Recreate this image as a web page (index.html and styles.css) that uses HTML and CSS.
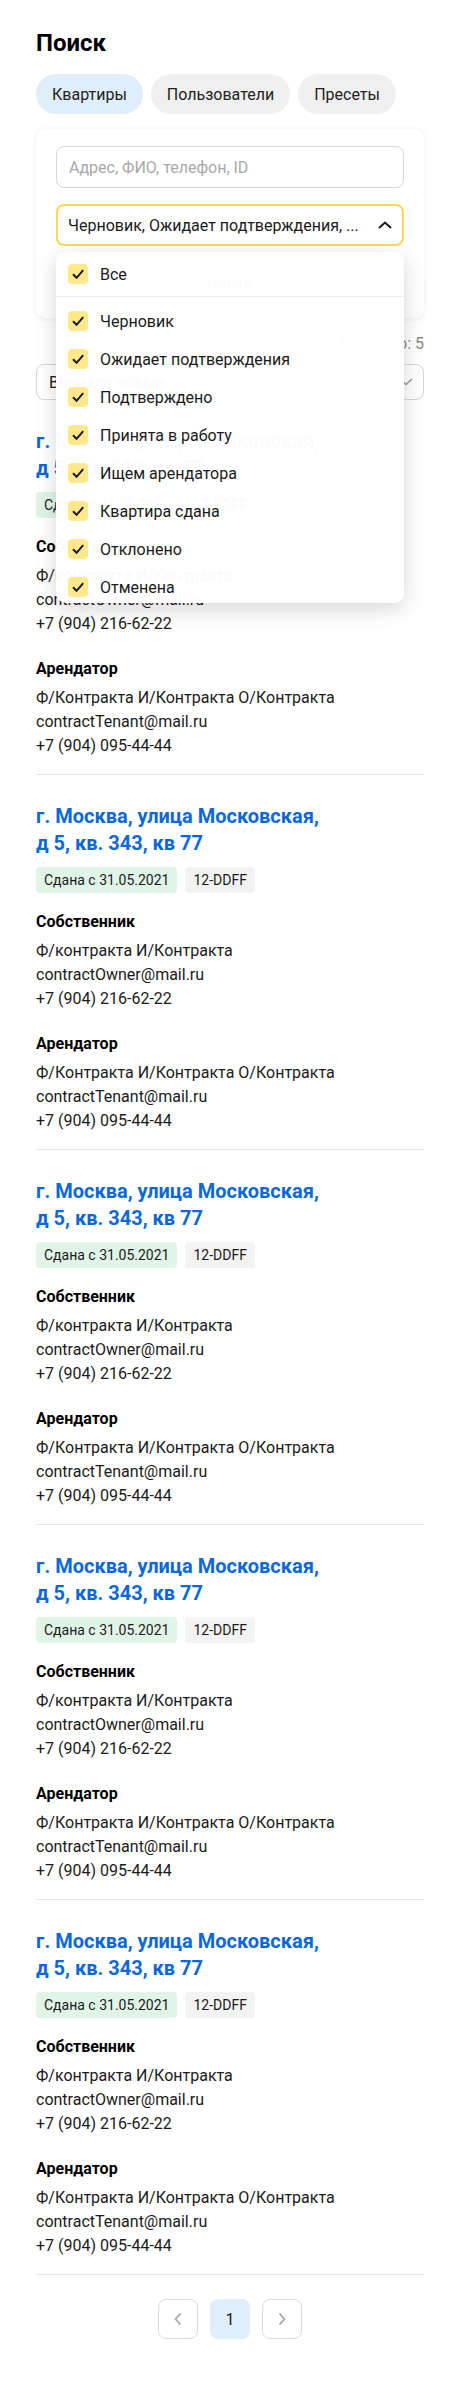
FILE: index.html
```html
<!DOCTYPE html>
<html lang="ru">
<head>
<meta charset="utf-8">
<title>Поиск</title>
<link rel="stylesheet" href="styles.css">
</head>
<body>
<main class="page">
  <h1 class="title">Поиск</h1>
  <nav class="tabs">
    <span class="tab tab-active">Квартиры</span>
    <span class="tab">Пользователи</span>
    <span class="tab">Пресеты</span>
  </nav>

  <section class="card">
    <div class="input"><span class="placeholder">Адрес, ФИО, телефон, ID</span></div>
    <div class="select-wrap">
      <div class="select select-open">
        <span class="select-text">Черновик, Ожидает подтверждения, ...</span>
        <svg class="chev" width="14" height="8" viewBox="0 0 14 8"><path d="M1 7 L7 1.5 L13 7" fill="none" stroke="#1a1a1a" stroke-width="2"/></svg>
      </div>
      <div class="dropdown">
        <div class="dd-head">
          <div class="dd-item"><span class="cb"><svg width="20" height="20" viewBox="0 0 20 20"><path d="M5 10.2 L8.6 13.8 L15.2 6.2" fill="none" stroke="#1a1a1a" stroke-width="2"/></svg></span>Все</div>
        </div>
        <div class="dd-list">
          <div class="dd-item"><span class="cb"><svg width="20" height="20" viewBox="0 0 20 20"><path d="M5 10.2 L8.6 13.8 L15.2 6.2" fill="none" stroke="#1a1a1a" stroke-width="2"/></svg></span>Черновик</div>
          <div class="dd-item"><span class="cb"><svg width="20" height="20" viewBox="0 0 20 20"><path d="M5 10.2 L8.6 13.8 L15.2 6.2" fill="none" stroke="#1a1a1a" stroke-width="2"/></svg></span>Ожидает подтверждения</div>
          <div class="dd-item"><span class="cb"><svg width="20" height="20" viewBox="0 0 20 20"><path d="M5 10.2 L8.6 13.8 L15.2 6.2" fill="none" stroke="#1a1a1a" stroke-width="2"/></svg></span>Подтверждено</div>
          <div class="dd-item"><span class="cb"><svg width="20" height="20" viewBox="0 0 20 20"><path d="M5 10.2 L8.6 13.8 L15.2 6.2" fill="none" stroke="#1a1a1a" stroke-width="2"/></svg></span>Принята в работу</div>
          <div class="dd-item"><span class="cb"><svg width="20" height="20" viewBox="0 0 20 20"><path d="M5 10.2 L8.6 13.8 L15.2 6.2" fill="none" stroke="#1a1a1a" stroke-width="2"/></svg></span>Ищем арендатора</div>
          <div class="dd-item"><span class="cb"><svg width="20" height="20" viewBox="0 0 20 20"><path d="M5 10.2 L8.6 13.8 L15.2 6.2" fill="none" stroke="#1a1a1a" stroke-width="2"/></svg></span>Квартира сдана</div>
          <div class="dd-item"><span class="cb"><svg width="20" height="20" viewBox="0 0 20 20"><path d="M5 10.2 L8.6 13.8 L15.2 6.2" fill="none" stroke="#1a1a1a" stroke-width="2"/></svg></span>Отклонено</div>
          <div class="dd-item"><span class="cb"><svg width="20" height="20" viewBox="0 0 20 20"><path d="M5 10.2 L8.6 13.8 L15.2 6.2" fill="none" stroke="#1a1a1a" stroke-width="2"/></svg></span>Отменена</div>
        </div>
      </div>
    </div>
    <button class="btn">Найти</button>
  </section>

  <div class="found">Найдено: 5</div>
  <div class="sort">
    <span>Вначале новые</span>
    <svg class="chev" width="14" height="8" viewBox="0 0 14 8"><path d="M1 1 L7 6.5 L13 1" fill="none" stroke="#999" stroke-width="1.6"/></svg>
  </div>

  <article class="flat">
    <a class="flat-title" href="#">г. Москва, улица Московская,<br>д 5, кв. 343, кв 77</a>
    <div class="tags"><span class="tag tag-green">Сдана с 31.05.2021</span><span class="tag">12-DDFF</span></div>
    <h3 class="role">Собственник</h3>
    <p class="info">Ф/контракта И/Контракта<br>contractOwner@mail.ru<br>+7 (904) 216-62-22</p>
    <h3 class="role role-second">Арендатор</h3>
    <p class="info">Ф/Контракта И/Контракта О/Контракта<br>contractTenant@mail.ru<br>+7 (904) 095-44-44</p>
  </article>
  <article class="flat">
    <a class="flat-title" href="#">г. Москва, улица Московская,<br>д 5, кв. 343, кв 77</a>
    <div class="tags"><span class="tag tag-green">Сдана с 31.05.2021</span><span class="tag">12-DDFF</span></div>
    <h3 class="role">Собственник</h3>
    <p class="info">Ф/контракта И/Контракта<br>contractOwner@mail.ru<br>+7 (904) 216-62-22</p>
    <h3 class="role role-second">Арендатор</h3>
    <p class="info">Ф/Контракта И/Контракта О/Контракта<br>contractTenant@mail.ru<br>+7 (904) 095-44-44</p>
  </article>
  <article class="flat">
    <a class="flat-title" href="#">г. Москва, улица Московская,<br>д 5, кв. 343, кв 77</a>
    <div class="tags"><span class="tag tag-green">Сдана с 31.05.2021</span><span class="tag">12-DDFF</span></div>
    <h3 class="role">Собственник</h3>
    <p class="info">Ф/контракта И/Контракта<br>contractOwner@mail.ru<br>+7 (904) 216-62-22</p>
    <h3 class="role role-second">Арендатор</h3>
    <p class="info">Ф/Контракта И/Контракта О/Контракта<br>contractTenant@mail.ru<br>+7 (904) 095-44-44</p>
  </article>
  <article class="flat">
    <a class="flat-title" href="#">г. Москва, улица Московская,<br>д 5, кв. 343, кв 77</a>
    <div class="tags"><span class="tag tag-green">Сдана с 31.05.2021</span><span class="tag">12-DDFF</span></div>
    <h3 class="role">Собственник</h3>
    <p class="info">Ф/контракта И/Контракта<br>contractOwner@mail.ru<br>+7 (904) 216-62-22</p>
    <h3 class="role role-second">Арендатор</h3>
    <p class="info">Ф/Контракта И/Контракта О/Контракта<br>contractTenant@mail.ru<br>+7 (904) 095-44-44</p>
  </article>
  <article class="flat">
    <a class="flat-title" href="#">г. Москва, улица Московская,<br>д 5, кв. 343, кв 77</a>
    <div class="tags"><span class="tag tag-green">Сдана с 31.05.2021</span><span class="tag">12-DDFF</span></div>
    <h3 class="role">Собственник</h3>
    <p class="info">Ф/контракта И/Контракта<br>contractOwner@mail.ru<br>+7 (904) 216-62-22</p>
    <h3 class="role role-second">Арендатор</h3>
    <p class="info">Ф/Контракта И/Контракта О/Контракта<br>contractTenant@mail.ru<br>+7 (904) 095-44-44</p>
  </article>

  <nav class="pager">
    <span class="pg pg-arrow"><svg width="10" height="14" viewBox="0 0 10 14"><path d="M7.5 1.5 L2.5 7 L7.5 12.5" fill="none" stroke="#a6a6a6" stroke-width="1.8"/></svg></span>
    <span class="pg pg-active">1</span>
    <span class="pg pg-arrow"><svg width="10" height="14" viewBox="0 0 10 14"><path d="M2.5 1.5 L7.5 7 L2.5 12.5" fill="none" stroke="#a6a6a6" stroke-width="1.8"/></svg></span>
  </nav>
</main>
</body>
</html>
```

FILE: styles.css
```css
* { box-sizing: border-box; }
html, body { margin: 0; padding: 0; background: #fff; }
body {
  font-family: Roboto, "Liberation Sans", Arial, sans-serif;
  color: #1a1a1a;
  font-size: 16px;
}
.page { padding: 28px 36px 0; }

.title {
  margin: 0 0 16px;
  font-size: 24px;
  line-height: 30px;
  font-weight: 700;
  color: #000;
}

.tabs { display: flex; gap: 8px; }
.tab {
  height: 40px;
  padding: 0 16px;
  border-radius: 20px;
  background: #f0f0f0;
  display: flex;
  align-items: center;
  font-size: 16px;
  color: #222;
}
.tab-active { background: #e0edfb; }

.card {
  margin-top: 15px;
  padding: 17px 20px 16px;
  border-radius: 10px;
  background: #fff;
  box-shadow: 0 1px 6px rgba(0,0,0,0.08);
  display: flex;
  flex-direction: column;
  gap: 16px;
}
.input {
  height: 42px;
  border: 1px solid #d6d6d6;
  border-radius: 8px;
  padding: 0 12px;
  display: flex;
  align-items: center;
}
.placeholder { color: #a8a8a8; }

.select-wrap { position: relative; }
.select {
  height: 42px;
  border: 2px solid #ffd84d;
  border-radius: 8px;
  padding: 0 10px 0 10px;
  display: flex;
  align-items: center;
  justify-content: space-between;
}
.select-text { color: #1a1a1a; }
.chev { flex: none; }

.dropdown {
  position: absolute;
  top: 48px;
  left: 0;
  right: 0;
  height: 351px;
  overflow: hidden;
  background: rgba(255,255,255,0.975);
  border-radius: 10px;
  box-shadow: 0 6px 22px rgba(0,0,0,0.16);
  z-index: 5;
}
.dd-head {
  height: 45px;
  border-bottom: 1px solid #ececec;
  display: flex;
  align-items: center;
}
.dd-list { padding-top: 5px; }
.dd-item {
  height: 38px;
  padding: 0 12px;
  display: flex;
  align-items: center;
  gap: 12px;
  font-size: 16px;
  color: #1a1a1a;
}
.dd-head .dd-item { height: 44px; }
.cb {
  width: 20px;
  height: 20px;
  border-radius: 4px;
  background: #ffe78c;
  display: flex;
  flex: none;
}

.btn {
  height: 40px;
  border: 0;
  border-radius: 8px;
  background: #f5f3ea;
  font: inherit;
  color: #6b6b6b;
}

.found {
  margin-top: 16px;
  text-align: right;
  color: #8c8c8c;
  line-height: 20px;
}
.sort {
  margin-top: 10px;
  height: 36px;
  border: 1px solid #d6d6d6;
  border-radius: 8px;
  padding: 0 10px 0 12px;
  display: flex;
  align-items: center;
  justify-content: space-between;
  color: #1a1a1a;
}

.flat {
  padding: 28px 0 16px;
  border-bottom: 1px solid #e8e8e8;
}
.flat-title {
  display: block;
  font-size: 20px;
  line-height: 27px;
  font-weight: 700;
  color: #0b68d9;
  text-decoration: none;
}
.tags { display: flex; gap: 8px; margin-top: 10px; }
.tag {
  height: 26px;
  padding: 0 8px;
  border-radius: 4px;
  background: #f3f3f3;
  display: flex;
  align-items: center;
  font-size: 14px;
  color: #1a1a1a;
}
.tag-green { background: #e0f5e8; }
.role {
  margin: 18px 0 6px;
  font-size: 16px;
  line-height: 22px;
  font-weight: 700;
  color: #000;
}
.role-second { margin-top: 22px; }
.info {
  margin: 0;
  font-size: 16px;
  line-height: 24px;
  color: #1a1a1a;
}

.pager {
  margin-top: 24px;
  display: flex;
  justify-content: center;
  gap: 12px;
}
.pg {
  width: 40px;
  height: 40px;
  border-radius: 8px;
  display: flex;
  align-items: center;
  justify-content: center;
  font-size: 16px;
}
.pg-arrow { border: 1px solid #dcdcdc; }
.pg-active { background: #e0edfb; }
```
